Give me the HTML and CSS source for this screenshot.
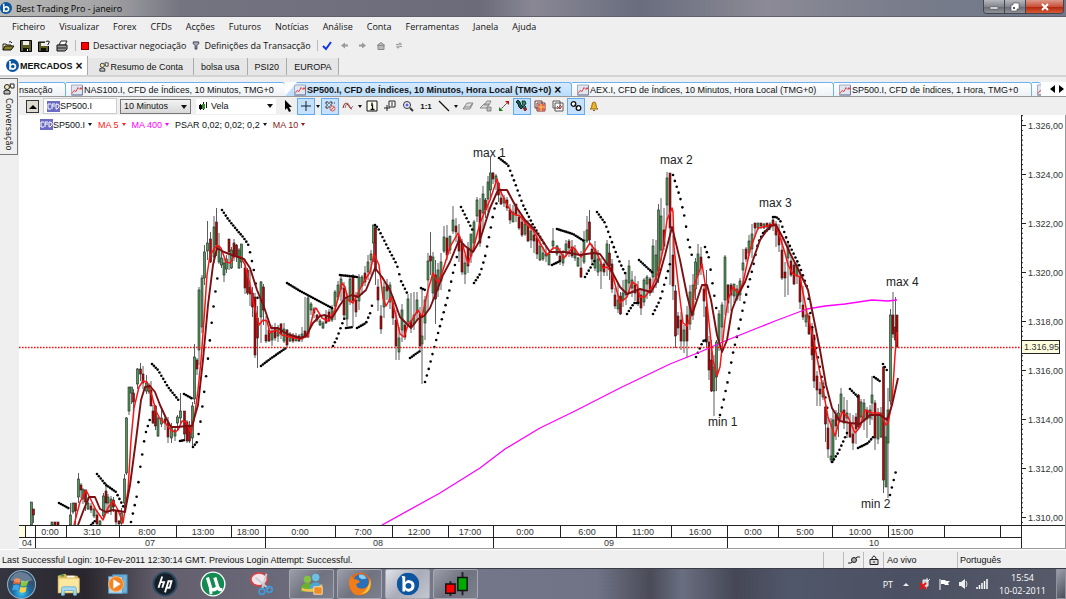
FILE: index.html
```html
<!DOCTYPE html>
<html lang="pt">
<head>
    <meta charset="utf-8">
    <title>Best Trading Pro - janeiro</title>
    <link rel="stylesheet" href="styles.css">
</head>
<body>
    <svg class="defs" aria-hidden="true">
        <symbol id="logo" viewBox="0 0 24 24">
            <circle cx="12" cy="12" r="12" fill="#0c559f"/>
            <path d="M5 3l4 1v6q2-3 5-2 5 1 5 6t-5 6q-4 1-5-2v2H6V6z" fill="#fff"/>
            <circle cx="12.500" cy="14" r="3.200" fill="#0c559f"/>
        </symbol>
        <symbol id="linechart" viewBox="0 0 12 11">
            <path d="M.5.5h11v10H.5z" fill="#dfe6f2" stroke="#a0abc4"/>
            <path d="M.5 10.500h11V1" fill="none" stroke="#727d9c"/>
            <path d="M1 9l2-3 2 1 2-4 2 2 1-2 1 2" fill="none" stroke="#e04848"/>
        </symbol>
        <symbol id="cfd" viewBox="0 0 13 11">
            <path d="M0 0h13v11H0z" fill="#6c6cc4"/>
            <path d="M4 3H1v5h3M5 8V3h3M5 5h3M9 3v5h1l2-2V4l-2-1z" fill="none" stroke="#fff"/>
        </symbol>
        <symbol id="people" viewBox="0 0 12 12">
            <circle cx="4" cy="4" r="2.500" fill="#f5e7b0" stroke="#222"/>
            <path d="M1 11V8q3-2 6 0v3z" fill="#bbb" stroke="#222"/>
            <path d="M7 1h4v4H8z" fill="#fff" stroke="#222"/>
        </symbol>
        <symbol id="disk" viewBox="0 0 12 12">
            <path d="M.5.5h11v11H.5z" fill="#5d5c25" stroke="#000"/>
            <path d="M3 1h6v4H3z" fill="#eee"/>
            <path d="M3 8h6v4H3z" fill="#111"/>
            <path d="M7 9h1v2H7z" fill="#fff"/>
        </symbol>
    </svg>

    <header class="titlebar">
        <svg class="icon12"><use href="#logo"/></svg>
        <h1>Best Trading Pro - janeiro</h1>
        <div class="window-buttons">
            <button aria-label="Minimizar"><svg viewBox="0 0 12 10"><path d="M2 5h8v2H2z" fill="#fff" stroke="#444" stroke-width=".5"/></svg></button>
            <button aria-label="Restaurar"><svg viewBox="0 0 12 10"><path d="M4 1h6v6H8v2H2V3h2z" fill="#fff" stroke="#444" stroke-width=".6"/><path d="M4 5h2v2H4z" fill="#556"/></svg></button>
            <button class="close" aria-label="Fechar"><svg viewBox="0 0 12 10"><path d="M3 2l6 6M9 2L3 8" stroke="#fff" stroke-width="2"/></svg></button>
        </div>
    </header>

    <nav class="menu">
        <button>Ficheiro</button>
        <button>Visualizar</button>
        <button>Forex</button>
        <button>CFDs</button>
        <button>Acções</button>
        <button>Futuros</button>
        <button>Notícias</button>
        <button>Análise</button>
        <button>Conta</button>
        <button>Ferramentas</button>
        <button>Janela</button>
        <button>Ajuda</button>
    </nav>

    <div class="toolbar">
        <button class="tool" aria-label="Abrir"><svg class="icon12" viewBox="0 0 12 12"><path d="M1 10V4h3l1 1h4v2" fill="#f5ef9c" stroke="#222"/><path d="M1 10l2-4h9l-3 4z" fill="#8a8428" stroke="#111"/><path d="M7 2q2-1 3 1" fill="none" stroke="#111"/></svg></button>
        <button class="tool" aria-label="Guardar"><svg class="icon12"><use href="#disk"/></svg></button>
        <button class="tool" aria-label="Guardar como"><svg class="icon12" viewBox="0 0 12 12"><path d="M.5 2h10v9.500H.5z" fill="#5d5c25" stroke="#000"/><path d="M3 3h4v3H3z" fill="#eee"/><path d="M3 8h5v3H3z" fill="#111"/><path d="M7 0h5v6H7z" fill="#efefef"/><path d="M8 2q0-1 2-1t1 2l-1 1v1" fill="none" stroke="#111"/></svg></button>
        <button class="tool" aria-label="Imprimir"><svg class="icon12" viewBox="0 0 12 12"><path d="M3 5l2-4h6L9 5z" fill="#fff" stroke="#222"/><path d="M1 5h10v4l-2 2H1z" fill="#999" stroke="#111"/><path d="M1 8h9" stroke="#222"/></svg></button>
        <span class="divider"></span>
        <button class="text-tool"><span class="stop"></span>Desactivar negociação</button>
        <button class="text-tool"><svg class="icon8" viewBox="0 0 8 10"><path d="M1 1h6v2L5 5v4H3V5L1 3z" fill="#aab" stroke="#334"/></svg>Definições da Transacção</button>
        <span class="divider dotted"></span>
        <button class="tool first" aria-label="Verificar"><svg class="icon10" viewBox="0 0 10 10"><path d="M1 5l3 3 5-7" fill="none" stroke="#1533e8" stroke-width="2"/></svg></button>
        <button class="tool" aria-label="Anterior"><svg class="icon8" viewBox="0 0 8 8"><path d="M0 4l4-3v2h3v2H4v2z" fill="#999"/></svg></button>
        <button class="tool" aria-label="Seguinte"><svg class="icon8" viewBox="0 0 8 8"><path d="M7 4L3 1v2H0v2h3v2z" fill="#999"/></svg></button>
        <button class="tool" aria-label="Início"><svg class="icon8" viewBox="0 0 8 8"><path d="M0 4l4-3 4 3M1 4h6v4H1z" fill="#bbb" stroke="#888"/></svg></button>
        <button class="tool" aria-label="Actualizar"><svg class="icon8" viewBox="0 0 8 8"><path d="M1 3h2q2-2 4 0M7 5H5Q3 7 1 5M5 1v3M3 4v3" fill="none" stroke="#999"/></svg></button>
    </div>

    <div class="workspaces">
        <button class="workspace selected"><svg class="icon13"><use href="#logo"/></svg>MERCADOS <span class="x">×</span></button>
        <button class="workspace account"><svg class="icon10"><use href="#people"/></svg>Resumo de Conta</button>
        <button class="workspace">bolsa usa</button>
        <button class="workspace">PSI20</button>
        <button class="workspace">EUROPA</button>
    </div>

    <main class="desk">
        <button class="chat-strip"><svg class="icon12"><use href="#people"/></svg><span>Conversação</span></button>

        <section class="document">
            <div class="doc-tabs">
                <button class="doc-tab cut">nsacção</button>
                <button class="doc-tab nas"><svg class="icon12"><use href="#linechart"/></svg>NAS100.I, CFD de Índices, 10 Minutos, TMG+0</button>
                <button class="doc-tab selected"><svg class="icon12"><use href="#linechart"/></svg>SP500.I, CFD de Índices, 10 Minutos, Hora Local (TMG+0) <span class="x">×</span></button>
                <button class="doc-tab aex"><svg class="icon12"><use href="#linechart"/></svg>AEX.I, CFD de Índices, 10 Minutos, Hora Local (TMG+0)</button>
                <button class="doc-tab hour"><svg class="icon12"><use href="#linechart"/></svg>SP500.I, CFD de Índices, 1 Hora, TMG+0</button>
                <button class="doc-tab last" aria-label="Gráfico"><svg class="icon12"><use href="#linechart"/></svg></button>
                <button class="scroll" aria-label="Esquerda"><svg viewBox="0 0 5 8"><path d="M5 0L0 4l5 4z"/></svg></button>
                <button class="scroll" aria-label="Direita"><svg viewBox="0 0 5 8"><path d="M0 0l5 4-5 4z"/></svg></button>
            </div>

            <div class="chart-tools">
                <button class="collapse" aria-label="Recolher"><svg viewBox="0 0 8 5"><path d="M0 5l4-4 4 4z"/></svg></button>
                <label class="symbol"><svg class="icon13"><use href="#cfd"/></svg><input type="text" value="SP500.I" aria-label="Símbolo"></label>
                <span class="pick period"><select aria-label="Período"><option>10 Minutos</option></select></span>
                <span class="pick style"><svg class="icon10" viewBox="0 0 10 10"><path d="M2.500 3v6M5.500 1v8M8.500 1v6" stroke="#111"/><path d="M1 4h3v4H1z"/><path d="M4 3h3v5H4z" fill="#3a8a3a"/></svg><select aria-label="Estilo"><option>Vela</option></select></span>
                <button class="ct" aria-label="Ponteiro"><svg viewBox="0 0 12 12"><path d="M3 0v10l2-2 2 4 2-1-2-4h3z"/></svg></button>
                <button class="ct on" aria-label="Cruz"><svg viewBox="0 0 12 12"><path d="M6 1v10M1 6h10" stroke="#123"/></svg></button>
                <span class="more"></span>
                <button class="ct on" aria-label="Grelha"><svg viewBox="0 0 12 12"><path d="M1 3h10M1 7h6M3 1v9M7 1v5" stroke="#333" stroke-dasharray="2 1"/><circle cx="8.500" cy="8.500" r="2.500" fill="none" stroke="#e54"/><path d="M7 10l3-3" stroke="#e54"/></svg></button>
                <button class="ct" aria-label="Indicadores"><svg viewBox="0 0 12 12"><path d="M1 8Q3 0 6 5t4 4" fill="none" stroke="#822"/><path d="M3 8q2-8 4-3t4 1" fill="none" stroke="#a66"/></svg></button>
                <span class="more"></span>
                <button class="ct" aria-label="Informação"><svg viewBox="0 0 12 12"><path d="M1 1h10v10H1z" fill="#fffff0" stroke="#111"/><path d="M5 5h1.500v4M4.500 9.500h4M6 2.500v1.500" fill="none" stroke="#111" stroke-width="1.300"/></svg></button>
                <button class="ct" aria-label="Janela de dados"><svg viewBox="0 0 12 12"><path d="M5 1h6v6H5z" fill="#fff" stroke="#222"/><path d="M7 3h2M7 5h2M3 5v6M0 8h6" stroke="#222"/></svg></button>
                <button class="ct" aria-label="Ampliar"><svg viewBox="0 0 12 12"><circle cx="5" cy="5" r="3.500" fill="#eef" stroke="#333"/><path d="M3.500 5h3M5 3.500v3" stroke="#33d"/><path d="M8 8l3 3" stroke="#333" stroke-width="2"/></svg></button>
                <button class="ct ratio">1:1</button>
                <button class="ct" aria-label="Linha"><svg viewBox="0 0 12 12"><path d="M1 1l10 10" stroke="#111" stroke-width="1.300"/></svg></button>
                <span class="more"></span>
                <button class="ct" aria-label="Apagar"><svg viewBox="0 0 12 12"><path d="M1 9l4-6h6L8 9z" fill="#ddd" stroke="#888"/><path d="M2 7h6l2-3" fill="none" stroke="#888"/></svg></button>
                <button class="ct" aria-label="Apagar tudo"><svg viewBox="0 0 12 12"><path d="M0 8l4-4h5L7 8zM4 5l3-4h4L9 5z" fill="#ddd" stroke="#888"/><path d="M7 7h4v4H7z" fill="#bbb" stroke="#888"/></svg></button>
                <button class="ct" aria-label="Escala"><svg viewBox="0 0 12 12"><path d="M2 10l8-8" stroke="#222" stroke-dasharray="2 1"/><path d="M7 1h4v4z" fill="#b11"/><path d="M1 7v4h4z" fill="#171"/></svg></button>
                <button class="ct on" aria-label="Operações"><svg viewBox="0 0 12 12"><path d="M0 2l2-2 2 2 1 3 2 2-2 2-2-2-1-3z" fill="#1b5a38" stroke="#123"/><path d="M6 1h3l1 3-2 1 2 2-1 2-2-3z" fill="#2a9a58" stroke="#134"/><path d="M7 8l4 1-2 2z" fill="#c22" stroke="#822"/></svg></button>
                <button class="ct" aria-label="Modelos"><svg viewBox="0 0 12 12"><path d="M1 1h7v7H1zM3 3h8v8H3z" fill="#fff" stroke="#633"/><path d="M4 4h7v7H4z" fill="#d65"/><path d="M4 7h7M7 4v7" stroke="#fc5"/></svg></button>
                <button class="ct" aria-label="Copiar gráfico"><svg viewBox="0 0 12 12"><path d="M1 1h7v7H1zM3 3h8v8H3z" fill="#fff" stroke="#555"/><path d="M5 6l3 3 2-3M5 9l4-4" fill="none" stroke="#b33"/></svg></button>
                <button class="ct on" aria-label="Ligar"><svg viewBox="0 0 12 12"><circle cx="3.500" cy="4" r="2.300" fill="#fff" stroke="#111" stroke-width="1.300"/><circle cx="8.500" cy="8" r="2.300" fill="#fff" stroke="#111" stroke-width="1.300"/><path d="M4 5l4 2" stroke="#111"/></svg></button>
                <button class="ct" aria-label="Alarme"><svg viewBox="0 0 12 12"><path d="M2 9q2-1 2-4 0-3 2-3t2 3q0 3 2 4z" fill="#f2b52b" stroke="#9a6b10"/><path d="M5 10h2v1H5z" fill="#853"/></svg></button>
            </div>

            <div class="chart">
                <div class="legend">
                    <button><svg class="icon13"><use href="#cfd"/></svg>SP500.I</button>
                    <button class="ma5">MA 5</button>
                    <button class="ma400">MA 400</button>
                    <button>PSAR 0,02; 0,02; 0,2</button>
                    <button class="ma10">MA 10</button>
                </div>
                <svg id="plot" viewBox="19 115 1047 434" role="img" aria-label="SP500.I, 10 Minutos">
                    <clipPath id="inside"><path d="M19 115h1002v410H19z"/></clipPath>
                    <g clip-path="url(#inside)">
                        <g id="candles"></g>
                        <g id="psar"></g>
                        <path class="line-400" d="M382 525L440 493 480 468 505 449 540 428 575 411 620 388 670 364 700 352 725 341 775 321 807 309 825 306 845 304 872 300 888 301 897 300"/>
                        <polyline id="ma5" class="line-5"/>
                        <polyline id="ma10" class="line-10"/>
                    </g>
                    <path class="last-price" d="M19 347.500H1021"/>
                    <g class="notes">
                        <text x="473" y="157">max 1</text>
                        <text x="660" y="164">max 2</text>
                        <text x="759" y="207">max 3</text>
                        <text x="886" y="286">max 4</text>
                        <text x="708" y="426">min 1</text>
                        <text x="861" y="508">min 2</text>
                    </g>
                    <g id="axes"></g>
                </svg>
            </div>
        </section>
    </main>

    <footer class="status">
        <span class="login">Last Successful Login: 10-Fev-2011 12:30:14 GMT. Previous Login Attempt: Successful.</span>
        <span class="cell empty"></span>
        <span class="cell"><svg class="icon12" viewBox="0 0 12 12"><path d="M0 9h3l6-6h3" fill="none" stroke="#222"/><circle cx="6" cy="6" r="2.500" fill="#aaa" stroke="#222"/></svg></span>
        <span class="cell"><svg class="icon10" viewBox="0 0 10 10"><path d="M3 5V3q2-4 4 0v2" fill="none" stroke="#222"/><path d="M1 4.500h8v5H1z" fill="#ddd" stroke="#222"/><path d="M5 6v2" stroke="#222"/></svg></span>
        <span class="cell live">Ao vivo</span>
        <span class="cell lang">Português</span>
    </footer>

    <div class="taskbar">
        <button class="launch start" aria-label="Iniciar"><svg viewBox="0 0 28 28"><defs><radialGradient id="orb" cy=".8"><stop offset="0" stop-color="#3cc8f4"/><stop offset=".6" stop-color="#1c6ba4"/><stop offset="1" stop-color="#34526f"/></radialGradient></defs><circle cx="14" cy="14" r="13.500" fill="url(#orb)" stroke="#8fb0c8"/><path d="M7 9q3-2 6 0l-1 5q-3-2-6 0z" fill="#ee6a2d"/><path d="M14 10q3 2 7 0l-2 5q-3 2-6 0z" fill="#8cc63d"/><path d="M6 15q3-2 6 0l-1 5q-3-2-6 0z" fill="#3ea5e8"/><path d="M13 16q3 2 6 0l-1 5q-3 2-6 0z" fill="#fdd044"/><path d="M3 10Q7 1 14 2t11 8q-11 4-22 0z" fill="#fff" opacity=".25"/></svg></button>
        <button class="launch" aria-label="Explorador"><svg viewBox="0 0 28 28"><path d="M3 5l8-2 2 2h11l2 3v16H3z" fill="#dcb855"/><path d="M4 8h22v15H4z" fill="#fbe8a0" stroke="#e7cc78"/><path d="M6 4h4v2H6z" fill="#4b9b4b"/><path d="M13 6h8" stroke="#fff" stroke-width="2"/><path d="M7 26v-7q0-2 2-2h12q2 0 2 2v7h-3v-5H10v5z" fill="#a7d9ee" stroke="#6fb1d0"/></svg></button>
        <button class="launch" aria-label="Media Player"><svg viewBox="0 0 28 28"><path d="M9 4h16v20H9z" fill="#71b2d8" stroke="#3f86b4"/><path d="M5 6h15v18H5z" fill="#b5d8eb" stroke="#5a9cc2"/><circle cx="13" cy="14" r="8" fill="#f58220" stroke="#fbb573"/><path d="M10 9l8 5-8 5z" fill="#fff"/></svg></button>
        <button class="launch" aria-label="HP"><svg viewBox="0 0 28 28"><circle cx="14" cy="14" r="12.500" fill="#161e28" stroke="#2d4b63" stroke-width="2"/><path d="M11 6L7 18M9 12h4l-2 6M18 10l-4 13M17 11h4l-2 7h-3" fill="none" stroke="#fff" stroke-width="2"/></svg></button>
        <button class="launch" aria-label="uTorrent"><svg viewBox="0 0 28 28"><circle cx="14" cy="14" r="13.500" fill="#fff"/><circle cx="14" cy="14" r="12" fill="#128a50"/><path d="M8 7l4 13q5 1 7-3l2 3h3M16 7l3 10" fill="none" stroke="#fff" stroke-width="3.500"/><path d="M11 18l1 7" stroke="#fff" stroke-width="3"/></svg></button>
        <button class="launch" aria-label="Recorte"><svg viewBox="0 0 28 28"><ellipse cx="12" cy="9" rx="9" ry="7" fill="#f4e6e8" stroke="#d0434d" stroke-width="2"/><path d="M8 7l14 12M20 3l-5 17" stroke="#c8d0da" stroke-width="2"/><circle cx="15" cy="22" r="3" fill="none" stroke="#4596d4" stroke-width="2"/><circle cx="23" cy="20" r="3" fill="none" stroke="#4596d4" stroke-width="2"/></svg></button>
        <button class="task" aria-label="Messenger"><svg viewBox="0 0 28 28"><circle cx="9" cy="9" r="4" fill="#83c341"/><path d="M2 22q0-9 7-9t7 9z" fill="#6ab12f"/><circle cx="18" cy="7" r="4" fill="#6ac0e6"/><path d="M11 22q0-10 7-10t8 10z" fill="#4aa5d8"/><path d="M3 18q10 4 22-4v4q-11 7-22 3z" fill="#f3c24c"/><path d="M16 17h9v8h-9z" fill="#ef8c22" stroke="#fbe1b9"/></svg></button>
        <button class="task" aria-label="Firefox"><svg viewBox="0 0 28 28"><circle cx="14" cy="14" r="12" fill="#e66a16"/><circle cx="15" cy="12" r="8.500" fill="#2a70b8"/><path d="M13 4q6-1 8 4l-5 1-3-2z" fill="#8bcbee"/><path d="M2 12l2-7 4 4q4-1 6 3l-4 2q0 5 6 5 6 0 9-7-1 13-11 14T2 12z" fill="#f07c1a"/><path d="M25 8q3 16-11 17 9-3 11-17z" fill="#fbc43a"/></svg></button>
        <button class="task current" aria-label="Best Trading Pro"><svg viewBox="0 0 28 28"><use href="#logo" x="2" y="2" width="24" height="24"/></svg></button>
        <button class="task" aria-label="Velas"><svg viewBox="0 0 28 28"><path d="M8 11v16M21 1v25" stroke="#222" stroke-width="2"/><path d="M3 14h10v10H3z" fill="#f00" stroke="#111" stroke-width="1.500"/><path d="M16 7h10v14H16z" fill="#0a0" stroke="#111" stroke-width="1.500"/></svg></button>
        <div class="tray">
            <span>PT</span>
            <svg viewBox="0 0 12 12"><path d="M3 8l3-3 3 3z" fill="#eee"/></svg>
            <svg viewBox="0 0 12 12"><path d="M4 2h5v6H4zM8 0v4M11 1L8 4M7 8v3" fill="#ccc" stroke="#eee"/><path d="M1 5l6 6M7 5l-6 6" stroke="#e11" stroke-width="2"/></svg>
            <svg viewBox="0 0 12 12"><path d="M2 1v11" stroke="#fff"/><path d="M3 2h4l1 1h4l-2 2 1 2H7L6 6H3z" fill="#fff"/></svg>
            <svg viewBox="0 0 12 12"><path d="M2 4h2l4-3v10L4 8H2z" fill="#eee"/><path d="M9 3q2 3 0 6" fill="none" stroke="#ddd"/></svg>
            <svg viewBox="0 0 12 12"><path d="M1 11V9M3.500 11V7M6 11V5M8.500 11V3M11 11V1" stroke="#fff" stroke-width="1.500"/></svg>
            <div class="clock"><time>15:54</time><span>10-02-2011</span></div>
        </div>
        <button class="show-desktop" aria-label="Mostrar ambiente de trabalho"></button>
    </div>

    <script src="chart.js"></script>
</body>
</html>
```

FILE: styles.css
```css
* {
    box-sizing: border-box;
}
body {
    margin: 0;
    height: 100vh;
    display: flex;
    flex-direction: column;
    overflow: hidden;
    background: #efefef;
    color: #111;
    font-family: "Liberation Sans", Arial, sans-serif;
    font-size: 9px;
}
button, input, select {
    margin: 0;
    padding: 0;
    border: 0;
    background: none;
    color: inherit;
    font: inherit;
    white-space: nowrap;
}
svg {
    display: block;
    flex: none;
}
.defs {
    position: absolute;
    width: 0;
    height: 0;
}
.icon8 { width: 8px; height: 9px; }
.icon10 { width: 10px; height: 10px; }
.icon12 { width: 12px; height: 12px; }
.icon13 { width: 13px; height: 13px; }

/* Title bar */
.titlebar {
    flex: none;
    height: 17px;
    display: flex;
    align-items: center;
    gap: 4px;
    border-bottom: 1px solid #5f6068;
    background: linear-gradient(90deg, #b9b9b8 0, #a3a3a5 10%, #747481 17%, #6b6b7a 45%, #898794 50%, #696d7e 60%, #8c8a96 72%, #787c8b 85%, #70798a 100%);
}
.titlebar h1 {
    margin: 0;
    font: 9px "Open Sans", sans-serif;
    color: #000;
}
.window-buttons {
    display: flex;
    align-self: flex-start;
    margin-left: auto;
    margin-right: 2px;
    border: 1px solid #43454d;
    border-top: 0;
    border-radius: 0 0 4px 4px;
    overflow: hidden;
}
.window-buttons button {
    width: 21px;
    height: 13px;
    display: flex;
    align-items: center;
    justify-content: center;
    border-right: 1px solid #43454d;
    background: linear-gradient(#b7b8bf, #85868f 50%, #686a75 52%, #90929b);
}
.window-buttons .close {
    width: 37px;
    border-right: 0;
    background: linear-gradient(#dc9a8b, #c9523c 50%, #b3240b 52%, #d65b38);
}
.window-buttons svg {
    width: 12px;
    height: 10px;
}

/* Menu and main toolbar */
.menu {
    flex: none;
    height: 19px;
    display: flex;
    align-items: center;
    gap: 14px;
    padding-left: 12px;
    font-family: "Open Sans", sans-serif;
}
.toolbar {
    flex: none;
    height: 19px;
    display: flex;
    align-items: center;
    font-family: "Open Sans", sans-serif;
}
.tool {
    width: 18px;
    display: flex;
    justify-content: center;
}
.tool:first-child {
    margin-left: -1px;
}
.divider {
    width: 1px;
    height: 11px;
    margin: 0 5px 0 4px;
    background: #bbb;
}
.divider.dotted {
    margin: 0;
}
.text-tool {
    display: flex;
    align-items: center;
    gap: 4px;
    margin-right: 6px;
}
.stop {
    width: 8px;
    height: 8px;
    border: 1px solid #800;
    background: #f00;
}
.workspaces {
    flex: none;
    height: 22px;
    display: flex;
    align-items: flex-end;
    padding-top: 3px;
    border-bottom: 2px solid #d3d3d3;
}
.workspace {
    height: 17px;
    display: flex;
    align-items: center;
    gap: 2px;
    padding: 0 7px;
    border-right: 1px solid #aaa;
    background: #e6e6e6;
}
.workspace.selected {
    height: 19px;
    padding: 0 4px 0 6px;
    gap: 1px;
    background: #fff;
    font-weight: bold;
}
.workspace.account {
    padding: 0 10px 0 11px;
}
.x {
    margin-left: 2px;
    font-size: 12px;
    line-height: 8px;
}

/* Work area */
.desk {
    flex: 1;
    min-height: 0;
    display: flex;
    align-items: flex-start;
    padding-top: 5px;
}
.chat-strip {
    flex: none;
    width: 18px;
    margin-top: -4px;
    padding: 4px 0;
    display: flex;
    flex-direction: column;
    align-items: center;
    gap: 3px;
    border: 1px solid #777;
    border-left: 0;
}
.chat-strip span {
    writing-mode: vertical-rl;
    font-family: "DejaVu Sans Condensed", sans-serif;
}
.document {
    flex: 1;
    min-width: 0;
    height: 100%;
    margin-left: 1px;
    display: flex;
    flex-direction: column;
}
.doc-tabs {
    flex: none;
    height: 15px;
    display: flex;
    background: #fff;
    border-bottom: 1px solid #9a9a9a;
}
.doc-tab {
    flex: 0 1 auto;
    display: flex;
    align-items: center;
    gap: 1px;
    padding-left: 5px;
    overflow: hidden;
    border-top: 1px solid #6cb2f3;
    border-right: 1px solid #6cb2f3;
    border-radius: 0 3px 0 0;
    background: linear-gradient(#fff, #eef1f5);
}
.doc-tab.cut { width: 47px; padding: 0; }
.doc-tab.nas { width: 219px; border-right: 0; }
.doc-tab.aex { width: 262px; }
.doc-tab.hour { width: 198px; }
.doc-tab.last { width: 9px; margin-right: 7px; border-right: 0; }
.doc-tab.selected {
    width: 287px;
    padding-left: 9px;
    background: linear-gradient(#d7eafd, #b9dcfc);
    clip-path: polygon(0 100%, 12px 0, 100% 0, 100% 100%);
    font-weight: bold;
}
.scroll {
    width: 9px;
    display: flex;
    justify-content: center;
    align-items: center;
}
.scroll svg {
    width: 5px;
    height: 8px;
}
.chart-tools {
    flex: none;
    height: 18px;
    display: flex;
    align-items: center;
    padding-left: 7px;
}
.collapse {
    width: 13px;
    height: 13px;
    display: flex;
    align-items: center;
    justify-content: center;
    border: 1px solid #333;
    background: #ddd8d0;
}
.collapse svg {
    width: 8px;
    height: 5px;
}
.symbol {
    width: 74px;
    height: 16px;
    margin-left: 4px;
    display: flex;
    align-items: center;
    padding-left: 3px;
    border: 1px solid #ccc;
    background: #fff;
}
.symbol input {
    min-width: 0;
    flex: 1;
}
.pick {
    position: relative;
    height: 15px;
    display: flex;
    align-items: center;
    background: #fff;
}
.pick select {
    flex: 1;
    height: 100%;
    appearance: none;
    padding-left: 3px;
}
.pick::after {
    content: "";
    position: absolute;
    right: 3px;
    top: 5px;
    border: 3px solid transparent;
    border-top: 4px solid #111;
    border-bottom: 0;
}
.period {
    width: 71px;
    margin-left: 3px;
    border: 1px solid #777;
    background: linear-gradient(#f3f3f3, #d8d8d8);
}
.style {
    width: 80px;
    margin: 0 3px 0 5px;
    padding-left: 2px;
}
.ct {
    width: 18px;
    height: 17px;
    display: flex;
    align-items: center;
    justify-content: center;
}
.ct.on {
    border: 1px solid #62aaf0;
    background: #c5e1fb;
}
.ct svg {
    width: 12px;
    height: 12px;
}
.ratio {
    font-size: 8px;
    font-weight: bold;
}
.more {
    width: 5px;
    display: flex;
    justify-content: center;
    margin-right: 1px;
}
.more::before, .legend button::after {
    content: "";
    border: 2px solid transparent;
    border-top: 3px solid currentColor;
    border-bottom: 0;
}

/* Chart */
.chart {
    position: relative;
    flex: 1;
    min-height: 0;
    background: #fff;
}
#plot {
    width: 100%;
    height: 100%;
}
.legend {
    position: absolute;
    left: 21px;
    top: 3px;
    display: flex;
    gap: 6px;
}
.legend button {
    display: flex;
    align-items: center;
    gap: 3px;
}
.legend .icon13 {
    margin-right: -3px;
}
.ma5 { color: #f22; }
.ma400 { color: #f0f; }
.ma10 { color: #8b1a1a; }

.wick { stroke: #333; stroke-width: 0.8; }
.up { fill: #4f9a58; stroke: #222; stroke-width: 0.6; }
.down { fill: #c00000; stroke: #222; stroke-width: 0.6; }
.line-5, .line-10, .line-400 {
    fill: none;
    stroke-linejoin: round;
}
.line-5 { stroke: #fa1414; stroke-width: 1.5; }
.line-10 { stroke: #7d0f12; stroke-width: 1.9; }
.line-400 { stroke: #f0f; stroke-width: 1.3; }
.last-price {
    stroke: #f11;
    stroke-width: 1.6;
    stroke-dasharray: 1.6 1.4;
}
.notes {
    font: 12px "Liberation Sans", sans-serif;
    fill: #222;
}
#axes {
    font: 9px "Liberation Sans", sans-serif;
    fill: #333;
}
.rule { stroke: #222; }
.rule-soft { stroke: #999; }
.price-tag { fill: #ffffdf; stroke: #222; }

/* Status bar */
.status {
    flex: none;
    height: 19px;
    display: flex;
    align-items: center;
    padding: 1px 0 0 2px;
    border-top: 1px solid #fff;
}
.login {
    margin-right: auto;
}
.cell {
    width: 20px;
    height: 16px;
    display: flex;
    align-items: center;
    justify-content: center;
    border-left: 1px solid #bbb;
}
.cell.live {
    width: 74px;
    justify-content: flex-start;
    padding-left: 3px;
}
.cell.lang {
    width: 109px;
    justify-content: flex-start;
    padding-left: 2px;
}

/* Taskbar */
.taskbar {
    flex: none;
    height: 31px;
    display: flex;
    align-items: stretch;
    border-top: 1px solid #3a3b45;
    background: linear-gradient(90deg, #34353f 0, #29262d 8%, #635e6c 15%, #74788a 40%, #6f7385 56%, #4b4b58 61%, #696f80 64%, #454755 69%, #51576a 74%, #4b5062 85%, #565a69 100%);
    color: #fff;
}
.taskbar svg {
    width: 26px;
    height: 26px;
}
.launch {
    width: 48px;
    display: flex;
    align-items: center;
    justify-content: center;
}
.start {
    width: 43px;
}
.start svg {
    width: 29px;
    height: 29px;
}
.start + .launch {
    width: 50px;
}
.task {
    width: 45px;
    margin-left: 3px;
    display: flex;
    align-items: center;
    justify-content: center;
    border: 1px solid #a5a7b1;
    border-radius: 2px;
    background: linear-gradient(135deg, #9c9eaa, #70727f 50%, #7c7f8c);
}
.launch + .task {
    margin-left: 4px;
}
.task.current {
    background: linear-gradient(135deg, #e2e4ec, #a9acb9 50%, #c4c6d0);
}
.tray {
    margin-left: auto;
    display: flex;
    align-items: center;
    gap: 7px;
    font-family: "Open Sans", sans-serif;
    white-space: nowrap;
}
.tray .icon, .tray svg {
    width: 12px;
    height: 12px;
}
.clock {
    display: flex;
    flex-direction: column;
    align-items: center;
    margin: 0 8px 0 4px;
    line-height: 13px;
}
.show-desktop {
    width: 10px;
    margin-left: 2px;
    border: 1px solid #9092a0;
    background: linear-gradient(135deg, #9da0ac, #4a4d5b);
}
```

FILE: chart.js
```js
const SVG = 'http://www.w3.org/2000/svg';
const DOT_STEP = 1.87;

// x, high, body top, body bottom, low, 1 = up / 0 = down
const candles = [
    [31.5,502,502,525,525,1],[33.5,509,509,515,523,0],[52,522,522,525,525,1],[55,522,522,525,525,0],[58,522,522,525,525,0],
    [70.5,503,515,525,525,1],[73,503,503,512,514,1],[75.5,503,503,511,525,0],[78.5,473,479,497,503,1],[81,483,485,490,498,0],[83,489,489,499,504,1],
    [85.5,490,490,502,511,0],[88,497,503,509,510,1],[91,503,506,510,513,0],[94,507,509,516,518,1],[97,510,515,524,525,0],[100,520,521,525,525,1],
    [103.5,493,496,516,518,1],[106,483,491,503,511,0],[108,494,497,503,514,1],[111,496,499,510,515,1],[113.5,497,500,507,512,0],[116,511,511,522,525,0],
    [119,520,521,524,525,0],[121.5,508,513,523,525,1],[124.5,474,479,503,515,1],[126.5,417,418,473,475,1],[129,387,387,411,415,1],[131.5,387,387,393,404,1],
    [133.5,389,393,402,411,0],[137.5,368,369,384,389,1],[140.5,363,369,374,381,0],[143,366,374,383,389,0],[146.5,375,383,391,394,1],[149,383,385,392,394,1],
    [151,381,390,406,406,0],[153,405,411,423,424,0],[155.5,405,406,426,430,0],[158,416,418,436,437,1],[161.5,408,418,424,427,1],[165,415,419,423,430,0],
    [168,417,423,437,443,0],[171.5,423,428,438,443,1],[175,426,430,436,441,1],[177.5,415,417,423,431,1],[180.5,393,411,418,425,1],[184.5,411,411,434,441,0],
    [187,420,422,441,443,0],[189.5,421,425,441,443,0],[192.5,402,406,438,448,1],[194.5,344,357,399,404,1],[197,358,360,369,375,0],[199,287,290,350,365,1],
    [202,275,278,327,333,1],[204.5,245,252,278,285,1],[207.5,221,243,251,260,1],[210.5,232,239,262,263,0],[214,216,227,257,263,1],[216.5,208,222,245,256,0],
    [219,233,246,262,264,1],[221.5,251,258,265,268,1],[224,258,263,275,282,1],[226.5,255,259,269,273,1],[229,239,239,252,270,0],[231.5,247,250,268,269,1],
    [234,239,243,257,261,0],[236.5,244,245,256,262,0],[239,248,250,268,269,1],[241.5,244,244,262,268,1],[245,259,268,288,294,0],[247.5,268,270,293,295,0],
    [250,270,287,294,306,0],[252.5,287,293,307,317,0],[255,293,297,355,358,0],[257.5,306,318,338,368,0],[261,281,282,317,343,1],[263.5,284,287,310,325,0],
    [266,316,335,341,343,0],[269,328,330,341,342,0],[272,325,331,340,346,1],[275,323,329,338,341,0],[278,325,328,336,342,1],[281,323,324,334,339,0],
    [284,323,329,341,343,1],[287,329,330,345,347,0],[290,332,334,341,342,1],[293,333,335,341,343,0],[296,333,336,341,341,1],[299,334,336,341,342,0],
    [302,327,334,339,342,1],[305,297,331,337,338,0],[308,296,298,337,338,1],[311,302,304,310,315,1],[314,307,309,313,318,0],[317,314,315,320,322,0],
    [320,319,321,325,326,1],[323,321,323,328,329,1],[326,310,316,323,324,0],[329,309,312,321,322,0],[332,305,308,320,322,1],[335,290,292,306,320,1],
    [338,281,285,297,300,1],[341,274,279,289,301,1],[344,282,288,315,320,0],[347,293,298,319,326,1],[350,276,279,301,305,1],[353,274,276,301,327,0],
    [356,292,300,312,317,0],[359,274,277,301,310,1],[362,275,277,286,295,1],[365,266,273,282,286,0],[368,255,262,272,280,1],[371,250,254,260,275,1],
    [373.5,225,225,243,262,1],[375.500,225,228,271,285,0],[378,279,287,300,311,0],[381,305,316,329,334,0],[384,282,287,307,318,1],[387,279,285,291,300,0],
    [390,282,285,302,309,1],[393,296,303,318,325,0],[396,310,320,346,360,0],[399,327,338,352,360,1],[402,304,310,330,342,1],[405,322,325,337,340,0],
    [408,294,299,322,325,1],[411,293,321,327,333,0],[414,292,315,324,330,1],[417,292,300,313,320,1],[420,307,314,346,352,0],[422,289,336,344,384,1],
    [425,296,300,323,340,1],[428,253,261,280,310,1],[430.5,232,256,261,275,0],[433,252,257,293,300,1],[435.5,260,275,299,324,0],[438,263,270,290,297,1],
    [441,253,262,281,290,1],[444,226,237,251,253,1],[447,225,238,255,260,0],[450,236,236,250,254,1],[453,206,220,231,234,1],[456,218,226,232,242,0],
    [459,224,236,251,262,0],[462,239,244,272,275,0],[465,255,263,274,284,1],[468,242,248,266,273,0],[471,234,234,256,263,1],[474,220,222,243,251,1],
    [477,197,200,216,222,1],[480,198,210,243,247,0],[483,186,194,213,231,1],[485.500,198,200,210,218,0],[488,176,182,199,212,1],[490.500,157,173,190,200,1],
    [493,172,173,179,184,0],[496,174,176,182,190,1],[498.500,182,183,195,202,0],[501,190,198,204,205,0],[504,195,198,203,207,1],[507,197,200,208,211,0],
    [510,204,210,220,224,0],[513,205,212,222,222,1],[516,204,204,215,222,0],[519,210,217,228,230,0],[522,215,222,235,237,0],[525,220,224,234,236,1],
    [528,220,226,241,242,0],[531,224,231,240,248,1],[534,230,235,241,253,0],[537,233,238,254,259,0],[540,238,246,260,261,1],[543,247,253,259,261,1],
    [546,246,254,256,262,1],[549,252,254,265,265,1],[553,228,241,246,250,1],[557,245,246,254,256,1],[560,248,256,261,265,0],[563,250,255,263,266,1],
    [566,240,244,253,257,1],[569,239,241,248,257,0],[572,240,247,256,258,0],[575,245,249,258,261,1],[578,257,258,266,267,1],[581,251,268,277,278,0],
    [584,231,240,262,264,1],[587,216,230,241,243,1],[589.5,210,222,240,245,0],[592,244,249,259,263,0],[595,241,249,268,271,1],[598,250,259,272,276,1],
    [601,258,264,271,289,1],[604,262,264,272,276,0],[607,240,244,264,276,1],[609.500,244,253,266,280,0],[612,259,264,289,293,0],[615,288,295,306,309,0],
    [618,283,300,309,313,1],[620.5,292,296,314,315,0],[623,280,293,300,307,1],[626,272,280,295,305,1],[629,260,266,283,292,1],[632,271,280,288,297,1],
    [635,276,285,293,301,0],[638,281,290,303,306,0],[641,289,295,308,315,0],[644,278,280,302,306,1],[647,275,277,284,299,1],[650,277,279,293,296,0],
    [653,239,246,277,293,1],[656,240,255,280,288,1],[658.5,204,210,271,283,1],[661,198,216,250,261,1],[664,208,230,246,250,0],[667,172,178,205,220,1],
    [670,173,173,228,285,0],[673,235,255,286,300,0],[675.5,285,291,336,348,0],[678,312,316,328,335,0],[681,312,320,341,350,0],[684,325,330,341,353,1],
    [687,306,315,341,358,0],[690,285,292,324,330,1],[693,274,285,315,320,1],[695.5,258,262,289,300,1],[698,244,254,275,285,1],[701,247,257,268,275,0],
    [704,285,289,301,317,0],[706.5,270,307,342,348,0],[709,336,342,370,380,0],[711.5,340,360,391,392,0],[714,355,367,391,416,1],[716.5,340,342,377,391,1],
    [719,310,314,341,351,1],[722,302,305,327,343,1],[725,255,257,300,315,1],[728,284,285,303,313,0],[731,283,285,295,311,0],[734,284,284,296,303,1],
    [737,285,289,299,301,1],[740,278,281,295,301,1],[743,249,263,270,284,1],[746,247,249,259,262,0],[749,235,241,253,256,1],[752,224,234,249,258,1],
    [755,223,223,228,237,0],[758,223,223,228,230,1],[761,223,223,226,229,0],[764,223,224,228,229,1],[767,223,223,227,232,0],[770,222,224,228,230,0],
    [773,216,220,225,231,0],[776,221,224,235,247,0],[779,224,233,245,252,0],[782,238,250,278,280,0],[785,262,272,278,297,0],[788,241,247,258,295,1],
    [791,255,261,275,277,0],[794,263,265,284,285,0],[797,263,265,276,284,1],[800,269,277,302,309,0],[803,286,305,317,320,0],[806,310,315,322,327,1],
    [809,313,316,334,335,0],[812,323,329,355,360,0],[814,342,335,381,388,0],[817,371,376,390,406,0],[820,382,389,394,406,0],[823,380,383,397,400,1],
    [825.500,403,407,424,442,0],[828,417,428,449,458,0],[831,418,456,460,462,1],[833,410,420,461,463,1],[836,410,415,426,440,0],[838.500,404,413,420,437,1],
    [841,388,394,412,420,1],[844,397,410,423,429,0],[847,400,413,418,438,1],[850,413,423,437,438,0],[853,415,434,443,450,0],[856,413,417,429,444,0],
    [858.5,394,395,427,428,0],[861,399,402,417,426,1],[864,399,403,421,430,1],[867,407,410,419,438,0],[870,405,410,418,425,1],[872,376,395,403,420,1],
    [875,400,403,438,450,0],[878,408,414,439,444,1],[881,407,413,437,438,1],[883.5,366,367,480,493,0],[886,417,437,487,487,1],[888,388,410,443,498,1],
    [890.5,309,315,401,405,1],[893,292,315,334,338,0],[895.5,297,327,340,345,0],[897,315,315,347,348,0]
];

const psar = [
    [[59,503],[70,509]],
    [[91,525],[96,520]],
    [[97,474],[106,485],[116,492],[124,508]],
    [[131,522],[137,495],[140,469],[142,456],[145,435],[150,419]],
    [[152,364],[158,370],[168,387],[180,402]],
    [[180,441],[185,440]],
    [[184,394],[193,399]],
    [[193,447],[197,442],[199,432],[201,418],[203,401],[205,386],[207,368],[211,329],[213,311],[216,287],[218,274]],
    [[222,210],[228,219],[236,229],[243,237],[248,244],[250,252],[254,271],[259,309]],
    [[261,366],[270,359],[286,348]],
    [[287,283],[300,291],[317,300],[332,308]],
    [[333,346],[337,338],[342,324],[345,317]],
    [[346,328],[353,327]],
    [[357,328],[366,323],[371,311],[373,300]],
    [[340,275],[357,277]],
    [[375,225],[378,228],[389,250],[397,265],[401,281],[408,295]],
    [[410,358],[420,351]],
    [[421,288],[425,290]],
    [[425,382],[429,368],[433,352],[437,337],[443,315],[449,292],[453,273],[458,252]],
    [[461,207],[467,219],[473,231]],
    [[474,283],[480,274],[485,257],[490,232],[494,210],[497,202]],
    [[499,158],[508,165],[515,183],[523,205],[533,225],[545,245]],
    [[552,265],[560,261]],
    [[557,229],[573,234],[584,241]],
    [[585,277],[595,260]],
    [[597,212],[605,223],[613,245],[620,263],[626,275]],
    [[627,314],[634,303],[640,303]],
    [[639,260],[653,273]],
    [[653,314],[660,300],[665,282],[671,260]],
    [[673,175],[680,197],[685,219],[688,240],[693,260]],
    [[705,247],[709,258],[713,287],[717,313]],
    [[696,357],[703,341],[707,340]],
    [[720,415],[723,403],[728,380],[733,353],[738,332],[743,308],[748,287],[753,267],[758,243],[763,233],[770,228]],
    [[773,217],[776,217],[780,220],[787,240],[800,267],[807,287],[813,333],[820,368],[828,412]],
    [[832,462],[838,453],[843,442],[847,433]],
    [[850,389],[858,397]],
    [[858,448],[868,443],[874,436]],
    [[874,377],[881,382]],
    [[883,364],[888,372]],
    [[890,495],[893,483],[897,467]]
];

const ma5 = '74,525 80,502 86,490 90,498 96,510 103,520 108,508 113,501 118,510 123,523 128,490 131,440 134,408 139,387 143,381 147,382 152,396 156,411 160,419 166,424 171,430 175,432 178,430 182,421 186,422 191,433 194,420 198,390 201,360 204,320 207,275 210,255 217,245 221,248 226,262 230,263 234,256 241,257 245,265 250,285 254,305 259,325 263,320 267,321 270,333 276,330 282,335 290,337 300,339 308,336 314,310 316,308 322,318 328,321 335,310 342,283 345,287 348,300 353,303 362,285 370,272 374,254 379,265 383,298 386,306 391,297 397,320 400,334 404,337 408,325 412,320 418,310 422,317 428,290 433,273 438,283 443,270 450,247 458,233 462,242 468,264 473,250 480,223 490,200 497,179 500,190 507,205 513,214 520,216 527,225 533,230 540,243 547,255 553,248 558,248 564,258 573,247 581,257 590,243 597,253 603,268 607,267 612,273 620,303 627,297 632,282 637,285 640,297 645,297 652,287 658,273 663,250 667,220 672,208 673,212 674,247 678,283 683,323 687,326 692,313 695,283 702,264 705,283 708,313 713,360 717,376 720,367 725,320 728,300 733,287 738,293 743,283 750,250 758,228 767,226 775,224 780,237 785,253 788,265 793,274 800,277 807,313 813,337 820,373 828,417 835,436 842,412 848,417 855,433 860,427 865,410 872,413 880,413 886,425 888,423 892,403 895,355 897,332';
const ma10 = '78,525 84,509 89,497 95,497 100,509 106,512 113,510 125,512 130,485 136,440 141,400 145,387 150,386 155,392 160,405 166,418 171,427 178,427 186,426 192,426 198,405 203,360 208,305 213,265 217,248 224,252 232,255 244,259 250,268 257,290 264,307 271,328 278,328 287,334 300,338 306,336 313,323 320,316 325,315 332,318 340,305 345,298 352,295 358,297 366,290 375,268 382,277 390,290 395,303 400,317 406,323 411,328 418,319 424,316 430,308 436,293 443,275 450,262 459,240 465,246 473,252 480,240 490,208 498,190 507,190 515,205 525,220 533,228 540,237 550,252 565,252 580,255 593,253 600,254 610,268 620,287 627,294 640,289 651,292 658,280 665,255 672,227 680,260 687,295 692,315 697,300 702,285 707,285 711,300 717,335 722,352 727,340 732,310 737,297 745,282 753,260 760,240 770,226 776,225 784,240 790,253 800,273 808,290 815,325 820,350 826,385 832,408 840,421 850,423 860,424 870,415 880,415 887,420 892,405 898,378';

function add(parent, name, attrs, text) {
    const el = document.createElementNS(SVG, name);
    Object.entries(attrs).forEach(([key, value]) => el.setAttribute(key, value));
    if (text) {
        el.textContent = text;
    }
    parent.appendChild(el);
}

const candleGroup = document.getElementById('candles');
candles.forEach(([x, high, top, bottom, low, up]) => {
    add(candleGroup, 'path', { class: 'wick', d: `M${x} ${high}V${low}` });
    add(candleGroup, 'rect', { class: up ? 'up' : 'down', x: x - 1, y: top, width: 2, height: bottom - top });
});

const psarGroup = document.getElementById('psar');
psar.forEach(run => {
    const end = run[run.length - 1][0];
    let i = 0;
    for (let x = run[0][0]; x <= end; x += DOT_STEP) {
        while (i < run.length - 2 && x > run[i + 1][0]) {
            i++;
        }
        const [x1, y1] = run[i];
        const [x2, y2] = run[i + 1];
        add(psarGroup, 'circle', { cx: x, cy: y1 + (y2 - y1) * (x - x1) / (x2 - x1), r: 1.3 });
    }
});

document.getElementById('ma5').setAttribute('points', ma5);
document.getElementById('ma10').setAttribute('points', ma10);

// Price axis
const axes = document.getElementById('axes');
add(axes, 'path', { class: 'rule', d: 'M1021.5 115V549' });
for (let i = -2; i <= 81; i++) {
    const y = 125.5 + i * 4.9;
    add(axes, 'path', { class: 'rule', d: `M1021 ${y}h${i % 10 === 0 ? 5 : 2}` });
    if (i % 10 === 0) {
        add(axes, 'text', { x: 1028, y: y + 3 }, `1.${326 - i / 5},00`);
    }
}
add(axes, 'rect', { class: 'price-tag', x: 1021.5, y: 340.5, width: 38, height: 13 });
add(axes, 'text', { x: 1024, y: 350 }, '1.316,95');

// Time axis
add(axes, 'rect', { x: 19, y: 526, width: 6, height: 11, fill: '#ffffdf' });
add(axes, 'path', { class: 'rule', d: 'M19 525.5H1066' });
add(axes, 'path', { class: 'rule', d: 'M19 537.5H1021' });
add(axes, 'path', { class: 'rule-soft', d: 'M19 548.5H1066M1065.5 115V549' });
[25.5, 35.5, 66.5, 119.5, 176.5, 231.5, 265.5, 335.5, 392.5, 448.5, 493.5, 560.5, 616.5, 671.5, 727.5, 778.5, 832.5, 888.5, 944.5, 1000.5].forEach(x => {
    add(axes, 'path', { class: 'rule', d: `M${x} 525V537` });
});
[35.5, 265.5, 493.5, 727.5].forEach(x => {
    add(axes, 'path', { class: 'rule', d: `M${x} 537V548` });
});
[[50, '0:00'], [92, '3:10'], [147, '8:00'], [203, '13:00'], [248, '18:00'], [300, '0:00'], [363, '7:00'], [419, '12:00'], [470, '17:00'], [525, '0:00'], [587, '6:00'], [643, '11:00'], [700, '16:00'], [753, '0:00'], [805, '5:00'], [860, '10:00'], [902, '15:00']].forEach(([x, label]) => {
    add(axes, 'text', { x: x, y: 535, 'text-anchor': 'middle' }, label);
});
[[27, '04'], [150, '07'], [378, '08'], [609, '09'], [874, '10']].forEach(([x, label]) => {
    add(axes, 'text', { x: x, y: 546, 'text-anchor': 'middle' }, label);
});
```
